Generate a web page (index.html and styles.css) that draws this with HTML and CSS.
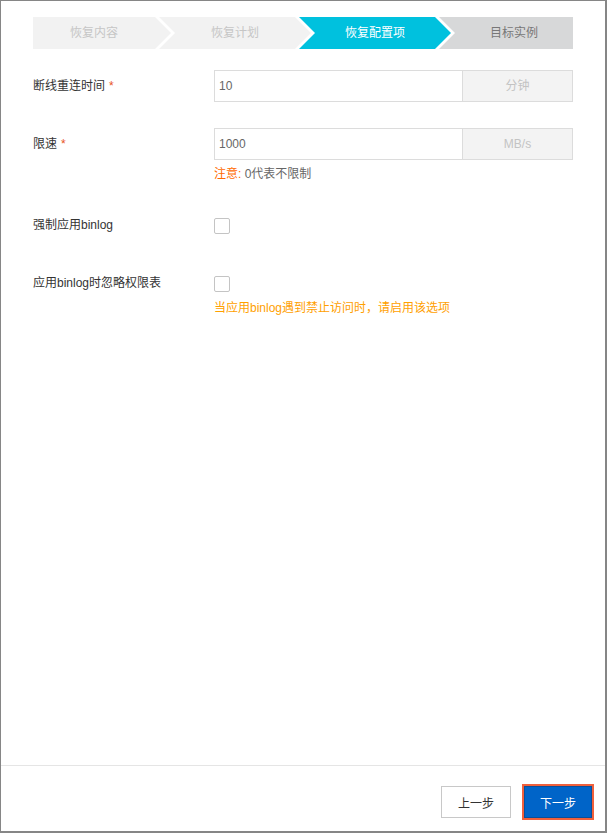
FILE: index.html
```html
<!DOCTYPE html>
<html lang="zh-CN">
<head>
<meta charset="UTF-8">
<meta name="viewport" content="width=device-width, initial-scale=1.0">
<title>恢复配置项</title>
<link rel="stylesheet" href="styles.css">
</head>
<body>

<div class="dialog">
  <div class="dialog-body">

    <div class="steps">
      <div class="step step-first">恢复内容</div>
      <div class="step">恢复计划</div>
      <div class="step step-active">恢复配置项</div>
      <div class="step step-last">目标实例</div>
    </div>

    <div class="form">
      <div class="form-row">
        <label class="form-label">断线重连时间<span class="required">*</span></label>
        <div class="form-control">
          <div class="input-group">
            <input type="text" class="input" value="10">
            <span class="addon">分钟</span>
          </div>
        </div>
      </div>

      <div class="form-row">
        <label class="form-label">限速<span class="required">*</span></label>
        <div class="form-control">
          <div class="input-group">
            <input type="text" class="input" value="1000">
            <span class="addon">MB/s</span>
          </div>
          <div class="help"><span class="help-warn">注意:</span> 0代表不限制</div>
        </div>
      </div>

      <div class="form-row">
        <label class="form-label">强制应用binlog</label>
        <div class="form-control">
          <span class="checkbox"></span>
        </div>
      </div>

      <div class="form-row">
        <label class="form-label">应用binlog时忽略权限表</label>
        <div class="form-control">
          <span class="checkbox"></span>
          <div class="help help-tip">当应用binlog遇到禁止访问时，请启用该选项</div>
        </div>
      </div>
    </div>

  </div>

  <div class="dialog-footer">
    <button class="btn">上一步</button>
    <button class="btn btn-primary">下一步</button>
  </div>
</div>

</body>
</html>
```

FILE: styles.css
```css
body, html {
  margin: 0;
  padding: 0;
  font-family: 'Liberation Sans', 'Noto Sans CJK SC', sans-serif;
  font-size: 12px;
  color: #333;
  background: #fff;
}

.dialog {
  box-sizing: border-box;
  width: 607px;
  height: 833px;
  border-style: solid;
  border-color: #868686;
  border-width: 1px 2px 2px 1px;
  display: flex;
  flex-direction: column;
}

.dialog-body {
  flex: 1;
  padding: 16px 32px 0 32px;
}

/* шаги */
.steps {
  display: flex;
  height: 32px;
}

.step {
  box-sizing: border-box;
  height: 32px;
  line-height: 32px;
  text-align: center;
  background-color: #f2f2f2;
  color: #c6c6c6;
  width: 152px;
  margin-left: -12px;
  padding: 0 16px;
  clip-path: polygon(0 0, calc(100% - 16px) 0, 100% 50%, calc(100% - 16px) 100%, 0 100%, 16px 50%);
}

.step-first {
  width: 138px;
  margin-left: 0;
  padding: 0 16px 0 0;
  clip-path: polygon(0 0, calc(100% - 16px) 0, 100% 50%, calc(100% - 16px) 100%, 0 100%);
}

.step-active {
  background-color: #00c1de;
  color: #fff;
}

.step-last {
  width: 134px;
  padding: 0 0 0 16px;
  background-color: #d7d8d9;
  color: #777;
  clip-path: polygon(0 0, 100% 0, 100% 100%, 0 100%, 16px 50%);
}

/* форма */
.form {
  margin-top: 21px;
}

.form-row {
  display: flex;
  margin-bottom: 26px;
}

.form-label {
  width: 181px;
  flex: none;
  line-height: 32px;
  color: #333;
}

.required {
  color: #e8531d;
  margin-left: 4px;
}

.form-control {
  width: 359px;
}

.input-group {
  box-sizing: border-box;
  display: flex;
  height: 32px;
  border: 1px solid #dcdcdc;
}

.input {
  flex: 1;
  min-width: 0;
  border: none;
  outline: none;
  padding: 0 4px;
  font-family: inherit;
  font-size: 12px;
  color: #666;
  background: #fff;
}

.addon {
  width: 109px;
  border-left: 1px solid #dcdcdc;
  background-color: #f3f3f3;
  color: #c3c3c3;
  text-align: center;
  line-height: 30px;
}

.help {
  padding-top: 5px;
  line-height: 18px;
  color: #666;
}

.help-warn {
  color: #ff6a00;
}

.help-tip {
  padding-top: 0;
  color: #ffa000;
}

.checkbox {
  display: block;
  box-sizing: border-box;
  width: 16px;
  height: 16px;
  margin: 9px 0 7px;
  border: 1px solid #c4c4c4;
  border-radius: 2px;
  background: #fff;
}

/* низ */
.dialog-footer {
  box-sizing: border-box;
  height: 66px;
  border-top: 1px solid #e5e5e5;
  display: flex;
  justify-content: flex-end;
  align-items: flex-start;
  padding: 20px 13px 0 0;
  gap: 13px;
}

.btn {
  box-sizing: border-box;
  width: 70px;
  height: 32px;
  border: 1px solid #c8c8c8;
  background: #fff;
  color: #333;
  font-family: inherit;
  font-size: 12px;
  padding: 0;
}

.btn-primary {
  width: 68px;
  background-color: #0064c8;
  border-color: #0a4f9a;
  color: #fff;
  box-shadow: 0 0 0 2px #f0603c;
}
```
